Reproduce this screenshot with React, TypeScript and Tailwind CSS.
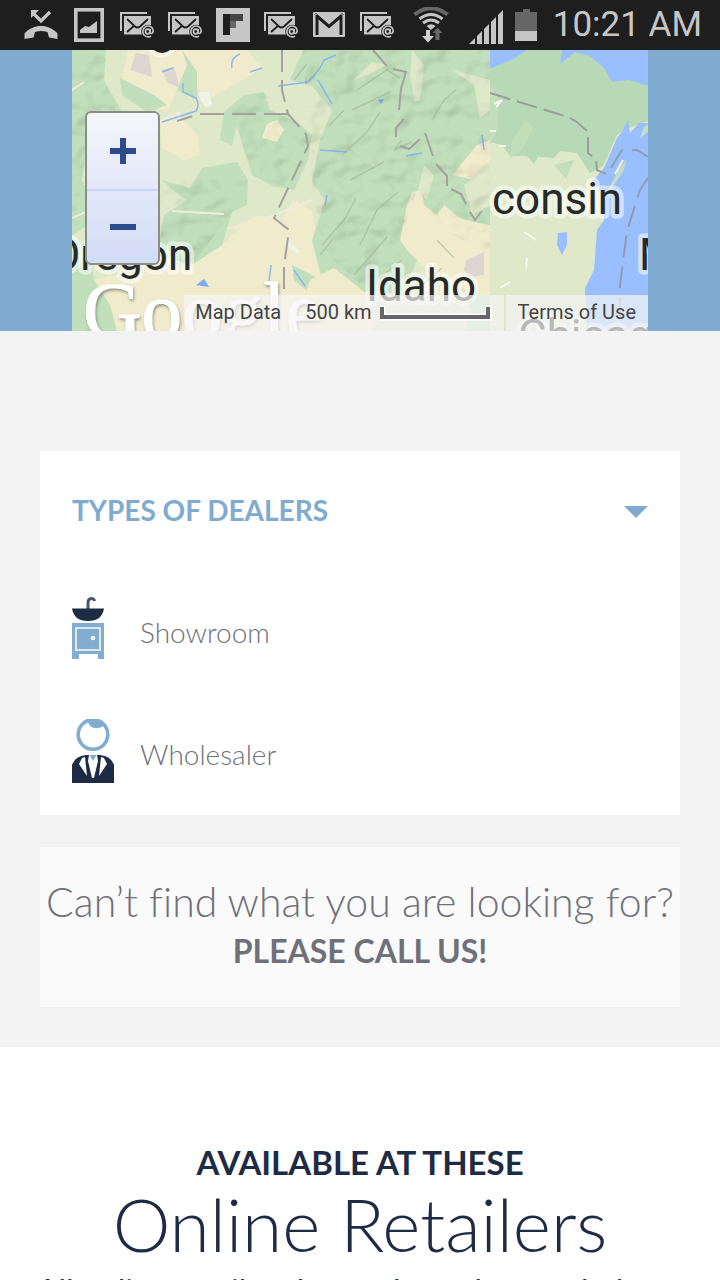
import type { ReactNode } from "react";

function MissedCall() {
  return (
    <svg className="h-[34px] w-[34px]" viewBox="0 0 34 34" fill="none">
      <path d="M9 5 L17 13 L26 4" stroke="#c6c6c6" strokeWidth="3.2" />
      <path d="M7 2h8l-8 8z" fill="#c6c6c6" />
      <path d="M0.500 31V25.500C9 15.500 25 15.500 33.500 25.500V31L25 29.500L23.500 24C19 22.500 15 22.500 11 24L9.500 29.500Z" fill="#c6c6c6" />
    </svg>
  );
}

function Picture() {
  return (
    <svg className="h-[34px] w-[34px]" viewBox="0 0 34 34" fill="none">
      <rect x="3.800" y="1.800" width="26.400" height="30.400" stroke="#c6c6c6" strokeWidth="3.600" />
      <path d="M8 25V22L13 18L17 19L25 13V25Z" fill="#c6c6c6" />
    </svg>
  );
}

function MailStack() {
  return (
    <svg className="h-[34px] w-[34px]" viewBox="0 0 34 34" fill="none">
      <path d="M1 23V5H27" stroke="#c6c6c6" strokeWidth="2" />
      <rect x="4" y="8" width="27" height="18.500" fill="#c6c6c6" />
      <path d="M7 11L15 18.500Q17.500 20.500 20 18.500L28 11M7 24L14.500 17.500" stroke="#1e1e1e" strokeWidth="1.800" />
      <circle cx="28" cy="23.500" r="6.800" fill="#1e1e1e" />
      <circle cx="27.800" cy="23.500" r="2.300" stroke="#c6c6c6" strokeWidth="1.700" />
      <path d="M30.200 21V24.500Q31 26.200 32.500 25Q34 22 31.800 19.500Q28 16.500 24.500 19.500Q21.500 23 24 27Q27 30 31 28.300" stroke="#c6c6c6" strokeWidth="1.600" />
    </svg>
  );
}

function Flip() {
  return (
    <svg className="h-[34px] w-[34px]" viewBox="0 0 34 34">
      <path d="M0 0H34V34H0Z" fill="#c6c6c6" />
      <path d="M7 6H14V27H7Z" fill="#1e1e1e" />
      <path d="M14 6H27V13H14Z" fill="#444" />
      <path d="M14 13H20V20H14Z" fill="#666" />
    </svg>
  );
}

function Gmail() {
  return (
    <svg className="h-[34px] w-[34px]" viewBox="0 0 34 34" fill="none">
      <rect x="1" y="4" width="32" height="25" rx="1" fill="#c6c6c6" />
      <path d="M5 27V8L17 18.500L29 8V27" stroke="#1e1e1e" strokeWidth="3" />
      <path d="M2 6.500H5M29 6.500H32" stroke="#8b8b8b" />
    </svg>
  );
}

function Wifi() {
  return (
    <svg className="h-[36px] w-[36px]" viewBox="0 0 36 36" fill="none">
      <path d="M1.500 7.500Q18 -5 34.500 7.500" stroke="#686868" strokeWidth="4" />
      <path d="M6.500 12Q18 3 29.500 12M10 16Q18 10 26 16" stroke="#c6c6c6" strokeWidth="3" />
      <path d="M13.500 19Q18 15.500 22.500 19L18 23Z" fill="#c6c6c6" />
      <path d="M13 23h4v6h4l-6 6.500L9 29h4z" fill="#d0d0d0" />
      <path d="M22.500 33V26H19.500L24.500 20.500L29.500 26H26.500V33Z" fill="#686868" />
    </svg>
  );
}

function Signal() {
  return (
    <svg className="h-[34px] w-[34px]" viewBox="0 0 34 34" fill="#c6c6c6">
      <path d="M0 34L6 28V34ZM8 26L13 21V34H8ZM15 19L20 14V34H15ZM22 12L27 7V34H22ZM29 5L34 0V34H29Z" />
    </svg>
  );
}

function Battery() {
  return (
    <svg className="h-[32px] w-[22px]" viewBox="0 0 22 32">
      <path d="M8 0H15V3H22V22H0V3H8Z" fill="#666" />
      <path d="M0 22H22V32H0Z" fill="#c6c6c6" />
    </svg>
  );
}

function StatusBar() {
  return (
    <header className="flex h-[50px] items-center justify-between bg-[#1e1e1e] pr-[18px] pl-6">
      <div className="flex gap-[14px]">
        <MissedCall />
        <Picture />
        <MailStack />
        <MailStack />
        <Flip />
        <MailStack />
        <Gmail />
        <MailStack />
      </div>
      <div className="flex items-center">
        <Wifi />
        <span className="flex items-center gap-3 pt-1 pl-5">
          <Signal />
          <span className="pb-1"><Battery /></span>
        </span>
        <time className="pl-4 font-[Roboto,sans-serif] text-[35px] leading-[48px] text-[#c6c6c6]">10:21 AM</time>
      </div>
    </header>
  );
}

function Terrain() {
  return (
    <svg className="block w-full" viewBox="0 0 576 281" fill="none" role="img" aria-label="Dealer map">
      <defs>
        <filter id="relief" x="0" y="0" width="100%" height="100%">
          <feTurbulence type="fractalNoise" baseFrequency="0.040 0.050" numOctaves="2" seed="8" result="n" />
          <feDiffuseLighting in="n" surfaceScale="9" diffuseConstant="1.15" lightingColor="#ffffff">
            <feDistantLight azimuth="225" elevation="60" />
          </feDiffuseLighting>
          <feComposite in2="SourceGraphic" operator="in" />
        </filter>
        <clipPath id="west"><path d="M0 0H418V281H0Z" /></clipPath>
        <clipPath id="east"><path d="M418 0H576V281H418Z" /></clipPath>
        <filter id="lift" x="-10%" y="-10%" width="120%" height="130%">
          <feDropShadow dx="1" dy="2" stdDeviation="1.5" floodColor="#555" floodOpacity="0.6" />
        </filter>
      </defs>
      <g clipPath="url(#west)">
        <path d="M0 0H418V281H0Z" fill="#dfe8c9" />
        <path d="M56 0H130L175 0L190 18L150 42L135 50L125 38L105 40L95 62L70 50L50 30ZM88 70L105 62L125 85L128 105L112 110L90 98ZM92 160L132 166L145 184L185 166L210 168L222 150L240 160L248 210L268 235L300 250L300 281H18L20 230L80 218L120 215L150 195L165 180L140 170Z" fill="#f1ebcd" />
        <path d="M0 0H34L32 30L50 62L20 62L10 130L25 170L0 185ZM110 0L125 22V50L105 40L115 15ZM48 28L82 45L95 55L75 62L50 45ZM152 62L172 45L192 42L198 60L225 72L240 85L236 110L222 140L200 136L180 125L172 100L165 75L160 95L148 90ZM90 130L118 138L130 118L165 112L176 130L175 155L160 162L150 195L120 215L85 205L92 165L115 150L98 138ZM0 190L16 196L22 230L38 255L45 281H0ZM220 215L246 228L240 245L222 230Z" fill="#c0dfba" />
        <path d="M231 0H418V281H395L400 215L372 205L345 210L330 245L295 240L288 250L265 220L250 230L240 190L253 150L240 132L248 90L260 60L240 36L218 30Z" fill="#c0dfba" />
        <path d="M195 74L205 70L212 80L205 92L190 88ZM340 142L350 140L352 155L365 165L372 155L388 168L402 172L418 175V245H405L360 225L335 200L328 190L335 155ZM380 125L405 95L418 90V115L402 130ZM238 230L262 218L300 248V281H220Z" fill="#f1ebcd" />
        <path d="M340 0L352 15L348 50L343 52L338 25ZM380 20L418 30V60L408 68L402 35ZM352 115L362 125L355 150L346 140ZM282 30L300 12L315 15L295 25ZM392 135L418 110V155L400 165Z" fill="#dfe8c9" />
        <path d="M64 3L77 5L80 27L58 20ZM90 20L102 17L108 38L96 33ZM394 210L412 202V225L398 227L392 220Z" fill="#dcd5d0" />
        <path d="M126 42L137 42L140 55L134 58L128 49ZM107 60L112 75L104 72ZM214 188L228 201L226 204L212 194Z" fill="#f1f3e6" />
        <path d="M90 22L101 18M111 33V42L124 48Q128 55 124 61L90 72M160 18Q158 8 168 4M178 22L190 18M206 36L236 32Q248 20 252 10L264 5M246 30L260 54M248 100L275 102M255 145L253 155M199 215L197 231M222 220L233 236M334 106L350 103M410 85L412 100" stroke="#8bb8f0" strokeWidth="1.500" />
        <path d="M124 235L132 229L137 237ZM306 50L312 49L309 54Z" fill="#79a9f8" />
        <path d="M0 0H34L32 30L45 62L10 130L0 185ZM160 60L192 42L240 85L222 140L180 125ZM90 130L176 130L160 162L120 215L85 205ZM231 0H418V205L372 180L345 140L328 190L345 240L295 240L250 200L240 132Z" fill="#fff" filter="url(#relief)" className="opacity-25 mix-blend-multiply" />
        <g stroke="#9caf94" strokeWidth="1.500" opacity="0.5">
          <path d="M285 40L315 20L328 28M280 60L318 42M270 105L295 82L308 62M278 130L312 112M250 195L272 170L284 148M288 195L305 160L326 142M282 225L315 187M305 230L330 210M350 235L370 218M360 70L372 50L384 40M330 90L322 100L340 92M222 30L235 14M258 75L272 60M365 190L382 208M248 205L260 190" />
        </g>
        <path d="M34 72Q30 122 35 160M18 160L0 168M100 161L152 164M240 150L190 170M0 40L12 32" stroke="#eceeda" strokeWidth="2" />
        <g stroke="#a6a09f" strokeWidth="2">
          <path d="M210 0V40L216 64L234 84L236 96L220 130L202 168L217 180L212 216V245" strokeDasharray="22 8" />
          <path d="M216 64H128L105 71" strokeDasharray="24 8" />
          <path d="M301 0L315 16M321 19L334 22L329 39L327 60M332 69L324 78V87M328 96L337 99L348 89M353 83L361 106M364 114L375 126V136M379 139L389 144L394 154M398 162L403 170L410 161" />
        </g>
      </g>
      <g clipPath="url(#east)">
        <path d="M418 0H576V281H418Z" fill="#dfe8c9" />
        <path d="M418 18L448 0H576V71L557 78L545 85L531 116L518 123L505 103L488 101L482 108L466 107L462 114L455 106H438L430 95L418 92Z" fill="#b7d9b5" />
        <path d="M418 35L427 50L425 80L418 95ZM440 92L454 70L461 78L450 100L438 108ZM482 115L502 110L494 129Z" fill="#c3dfba" />
        <path d="M418 0H455L441 9L418 19ZM490 0L488 14L503 2L518 6L532 18L540 32L557 30L576 36V0ZM550 82L556 70L558 83L567 73H576V281H515L513 238L522 220L525 180L532 170V145L520 132L532 118L545 88ZM486 183L495 182V195L490 205L485 195Z" fill="#99bfff" />
        <path d="M536 140L548 118L554 110L552 120L540 138L530 150ZM568 88L572 77L576 74V82Z" fill="#c8dec3" />
        <path d="M422 54L430 50L424 57M418 81H424M427 96H434M452 182L464 190M455 208L454 218M428 238L438 232M551 110L543 124" stroke="#f6f6f0" strokeWidth="2" />
        <path d="M418 43L496 67L505 72L516 82V103L524 109L525 120L534 124" stroke="#9b9e9b" strokeWidth="2" strokeDasharray="21 7" />
        <path d="M539 118L550 100H565L576 107M576 128L568 140L555 181L548 235V270" stroke="#909cae" strokeWidth="2" strokeDasharray="22 9" />
      </g>
      <g className="font-[Roboto,sans-serif]" fontSize="44" fill="#262b29" stroke="#fff" strokeOpacity="0.55" strokeWidth="9" strokeLinejoin="round" paintOrder="stroke">
        <text x="78" y="-6">g</text>
        <text x="-22" y="220">Oregon</text>
        <text x="294" y="251">Idaho</text>
        <text x="420" y="164">consin</text>
        <text x="567" y="220">M</text>
        <text x="446" y="301">Chicago</text>
      </g>
      <text x="11" y="288" fontSize="81" fill="#fff" stroke="#fff" filter="url(#lift)" className="font-['Liberation_Serif',serif]">Google</text>
    </svg>
  );
}

function MapPanel() {
  return (
    <section className="bg-[#80abd0] px-[10%]">
      <div className="relative overflow-hidden">
        <Terrain />
        <div className="absolute top-[61px] left-[13px] flex w-[75px] flex-col overflow-hidden rounded-md border-2 border-[#8a8f86] bg-linear-to-b from-[#f5f6fb] via-[#e3e8f9] to-[#d3dcf8]">
          <button aria-label="Zoom in" className="flex h-[78px] items-center justify-center border-b-2 border-[#cbd6f5]">
            <svg className="h-7 w-7" viewBox="0 0 28 28" fill="#2d4c8e"><path d="M11 1H17V11H27V17H17V27H11V17H1V11H11Z" /></svg>
          </button>
          <button aria-label="Zoom out" className="flex h-[72px] items-center justify-center">
            <svg className="h-7 w-7" viewBox="0 0 28 28" fill="#2d4c8e"><path d="M1 11H27V17H1Z" /></svg>
          </button>
        </div>
        <div className="absolute right-0 bottom-0 flex h-9 gap-[2px] font-[Roboto,sans-serif] text-[20px] leading-[34px] text-[#444]">
          <div className="flex items-start bg-[#f5f5f5]/70 pr-3 pl-[11px]">
            <button className="pr-6">Map Data</button>
            <span className="pr-2">500 km</span>
            <svg className="mt-[11px] h-[15px] w-[112px]" viewBox="0 0 112 15" fill="none">
              <path d="M2 0V11H109V0" stroke="#fff" strokeWidth="7" />
              <path d="M2 1V11H108V1" stroke="#666" strokeWidth="4" />
            </svg>
          </div>
          <a href="#terms" className="bg-[#f5f5f5]/70 pr-3 pl-3">Terms of Use</a>
        </div>
      </div>
    </section>
  );
}

function SinkIcon() {
  return (
    <svg className="h-[62px] w-8" viewBox="0 0 32 62" fill="none">
      <path d="M16 12V6Q16 1.500 19.500 1.500Q22 1.500 22.500 4" stroke="#4a566b" strokeWidth="3" />
      <path d="M0 11.500H32Q30 24 16 24Q2 24 0 11.500Z" fill="#1e2b45" />
      <path d="M0 26H32V62H26V57H7V62H0Z" fill="#82adcf" />
      <rect x="4" y="31" width="24" height="22" stroke="#dce9f3" strokeWidth="2" />
      <circle cx="21" cy="41" r="2.300" fill="#eef5fa" />
    </svg>
  );
}

function PersonIcon() {
  return (
    <svg className="h-16 w-[42px]" viewBox="0 0 42 64" fill="none">
      <circle cx="21" cy="15.500" r="14.800" stroke="#82adcf" strokeWidth="3.600" />
      <path d="M16 3Q18 10 26 9Q32 8 32 5L26 0H17Z" fill="#82adcf" />
      <path d="M0 64V46Q3 37 14 36H28Q39 37 42 46V64Z" fill="#1e2b45" />
      <path d="M17 36H25L26 42L22 59H20L16 42ZM10 39L7 45L15 57L13 38ZM32 39L35 45L27 57L29 38Z" fill="#fff" />
      <path d="M17.500 36H24.500L21 42Z" fill="#82adcf" />
    </svg>
  );
}

function DealerType({ icon, label }: { icon: ReactNode; label: string }) {
  return (
    <li className="flex h-16 items-start">
      <span className="w-[68px]">{icon}</span>
      <span className="pt-[15px] text-[28px] leading-[40px] font-light text-[#6f7078]">{label}</span>
    </li>
  );
}

export default function App() {
  return (
    <div className="h-screen overflow-hidden bg-white font-[Lato,sans-serif] [font-variant-ligatures:none]">
      <StatusBar />
      <MapPanel />
      <main>
        <section className="bg-[#f3f3f3] px-10 pt-[120px] pb-10">
          <div className="bg-white px-8 pt-[39px] pb-8">
            <button className="flex w-full items-center justify-between text-[#80abd0]">
              <span className="text-[28px] leading-[40px] font-bold">TYPES OF DEALERS</span>
              <svg className="mt-1 h-3 w-6" viewBox="0 0 24 12" fill="currentColor"><path d="M0 0H24L12 12Z" /></svg>
            </button>
            <ul className="flex flex-col gap-[58px] pt-[67px]">
              <DealerType icon={<SinkIcon />} label="Showroom" />
              <DealerType icon={<PersonIcon />} label="Wholesaler" />
            </ul>
          </div>
          <div className="mt-8 bg-[#fafafa] pt-[30px] pb-8 text-center text-[#6f7078]">
            <p className="text-[41px] leading-[50px] font-light whitespace-nowrap">Can’t find what you are looking for?</p>
            <a href="#call" className="block text-[32px] leading-[48px] font-bold">PLEASE CALL US!</a>
          </div>
        </section>
        <section className="px-8 pt-[95px] text-center text-[#1e2b45]">
          <h2>
            <span className="block text-[33px] leading-[40px] font-bold">AVAILABLE AT THESE</span>
            <span className="block text-[73px] leading-[84px] font-light">Online Retailers</span>
          </h2>
          <p className="pt-[3px] text-[32px] leading-[44px] whitespace-nowrap">All online retailers know through more help an</p>
        </section>
      </main>
    </div>
  );
}
